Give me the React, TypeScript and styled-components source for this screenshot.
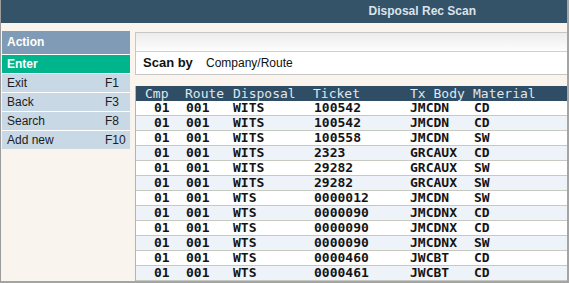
import React from 'react'
import styled, { createGlobalStyle } from 'styled-components'

type TRecord = {
	cmp: string
	route: string
	disposal: string
	ticket: string
	body: string
	material: string
}

const records: TRecord[] = [
	{ cmp: '01', route: '001', disposal: 'WITS', ticket: '100542', body: 'JMCDN', material: 'CD' },
	{ cmp: '01', route: '001', disposal: 'WITS', ticket: '100542', body: 'JMCDN', material: 'CD' },
	{ cmp: '01', route: '001', disposal: 'WITS', ticket: '100558', body: 'JMCDN', material: 'SW' },
	{ cmp: '01', route: '001', disposal: 'WITS', ticket: '2323', body: 'GRCAUX', material: 'CD' },
	{ cmp: '01', route: '001', disposal: 'WITS', ticket: '29282', body: 'GRCAUX', material: 'SW' },
	{ cmp: '01', route: '001', disposal: 'WITS', ticket: '29282', body: 'GRCAUX', material: 'SW' },
	{ cmp: '01', route: '001', disposal: 'WTS', ticket: '0000012', body: 'JMCDN', material: 'SW' },
	{ cmp: '01', route: '001', disposal: 'WTS', ticket: '0000090', body: 'JMCDNX', material: 'CD' },
	{ cmp: '01', route: '001', disposal: 'WTS', ticket: '0000090', body: 'JMCDNX', material: 'CD' },
	{ cmp: '01', route: '001', disposal: 'WTS', ticket: '0000090', body: 'JMCDNX', material: 'SW' },
	{ cmp: '01', route: '001', disposal: 'WTS', ticket: '0000460', body: 'JWCBT', material: 'CD' },
	{ cmp: '01', route: '001', disposal: 'WTS', ticket: '0000461', body: 'JWCBT', material: 'CD' },
]

// header / data left padding per column
const headPad = [9, 2, 2, 2, 2, 2]
const cellPad = [18, 3, 2, 3, 2, 3]
const headers = ['Cmp', 'Route', 'Disposal', 'Ticket', 'Tx Body', 'Material']

const menu = [
	{ label: 'Exit', key: 'F1' },
	{ label: 'Back', key: 'F3' },
	{ label: 'Search', key: 'F8' },
	{ label: 'Add new', key: 'F10' },
]

const App = () => {
	return (
		<>
			<GlobalStyle />
			<Frame>
				<TitleBar>Disposal Rec Scan</TitleBar>
				<Body>
					<Sidebar>
						<ActionHead>Action</ActionHead>
						<EnterItem>Enter</EnterItem>
						{menu.map((item) => (
							<MenuItem key={item.key}>
								<span>{item.label}</span>
								<span>{item.key}</span>
							</MenuItem>
						))}
					</Sidebar>

					<Panel>
						<ScanBox>
							<GradientBar />
							<ScanRow>
								<ScanLabel>Scan by</ScanLabel>
								<span>Company/Route</span>
							</ScanRow>
						</ScanBox>

						<Table>
							<HeadRow>
								{headers.map((h, i) => (
									<Cell key={h} pad={headPad[i]}>
										{h}
									</Cell>
								))}
							</HeadRow>
							{records.map((r, index) => (
								<DataRow key={index} striped={index % 2 === 1}>
									{[r.cmp, r.route, r.disposal, r.ticket, r.body, r.material].map(
										(value, i) => (
											<Cell key={i} pad={cellPad[i]}>
												{value}
											</Cell>
										),
									)}
								</DataRow>
							))}
						</Table>
					</Panel>
				</Body>
			</Frame>
		</>
	)
}

export default App

const GlobalStyle = createGlobalStyle`
	html, body {
		margin: 0;
		padding: 0;
		background: #fff;
	}
	* {
		box-sizing: border-box;
	}
`

const Frame = styled.div`
	width: 569px;
	height: 283px;
	overflow: hidden;
	display: flex;
	flex-direction: column;
	border-left: 1px solid #9c9c9c;
	border-right: 2px solid #a4a4a4;
	border-bottom: 2px solid #a4a4a4;
	background: #f9f4ed;
	font-family: 'Liberation Sans', Arial, sans-serif;
	font-size: 12px;
	color: #1a1a1a;
`

const TitleBar = styled.div`
	height: 23px;
	flex-shrink: 0;
	background: #345268;
	color: #dbe3ea;
	font-weight: bold;
	font-size: 12px;
	line-height: 23px;
	text-align: right;
	padding-right: 91px;
`

const Body = styled.div`
	flex: 1;
	display: flex;
	gap: 5px;
	padding: 8px 0 0 1px;
	min-height: 0;
`

const Sidebar = styled.div`
	width: 128px;
	flex-shrink: 0;
	align-self: flex-start;
	display: flex;
	flex-direction: column;
	gap: 1px;
	background: #fff;
`

const ActionHead = styled.div`
	height: 23px;
	line-height: 23px;
	padding-left: 5px;
	background: #7f9bb5;
	color: #fff;
	font-weight: bold;
`

const EnterItem = styled.div`
	height: 18px;
	line-height: 18px;
	padding-left: 5px;
	background: #00b58b;
	color: #fff;
	font-weight: bold;
`

const MenuItem = styled.div`
	height: 18px;
	line-height: 18px;
	padding-left: 5px;
	display: grid;
	grid-template-columns: 98px 1fr;
	background: #c9d8e5;
	color: #1c1c1c;
`

const Panel = styled.div`
	flex: 1;
	display: flex;
	flex-direction: column;
	min-width: 0;
`

const ScanBox = styled.div`
	background: #fff;
	border: 1px solid #c6c6c6;
	border-right: none;
	margin-top: 1px;
`

const GradientBar = styled.div`
	height: 19px;
	background: linear-gradient(#ececec, #fdfdfd);
	border-bottom: 1px solid #cfcfcf;
`

const ScanRow = styled.div`
	height: 22px;
	line-height: 22px;
	padding-left: 7px;
	display: grid;
	grid-template-columns: 63px 1fr;
	color: #111;
`

const ScanLabel = styled.span`
	font-weight: bold;
	font-size: 13px;
`

const Table = styled.div`
	margin-top: 11px;
	border-left: 1px solid #b4b4b4;
	font-family: 'DejaVu Sans Mono', 'Liberation Mono', monospace;
	font-size: 13px;
`

const Row = styled.div`
	display: grid;
	grid-template-columns: 47px 48px 80px 97px 63px 1fr;
	white-space: pre;
`

const HeadRow = styled(Row)`
	height: 15px;
	line-height: 15px;
	background: #2f4e66;
	color: #dfe7ef;
`

const DataRow = styled(Row)<{ striped: boolean }>`
	height: 15px;
	line-height: 14px;
	border-bottom: 1px solid #c6c9bf;
	background: ${(p) => (p.striped ? '#eef2f9' : '#fff')};
	color: #141414;
	font-weight: bold;
`

const Cell = styled.div<{ pad: number }>`
	padding-left: ${(p) => p.pad}px;
	overflow: hidden;
`
